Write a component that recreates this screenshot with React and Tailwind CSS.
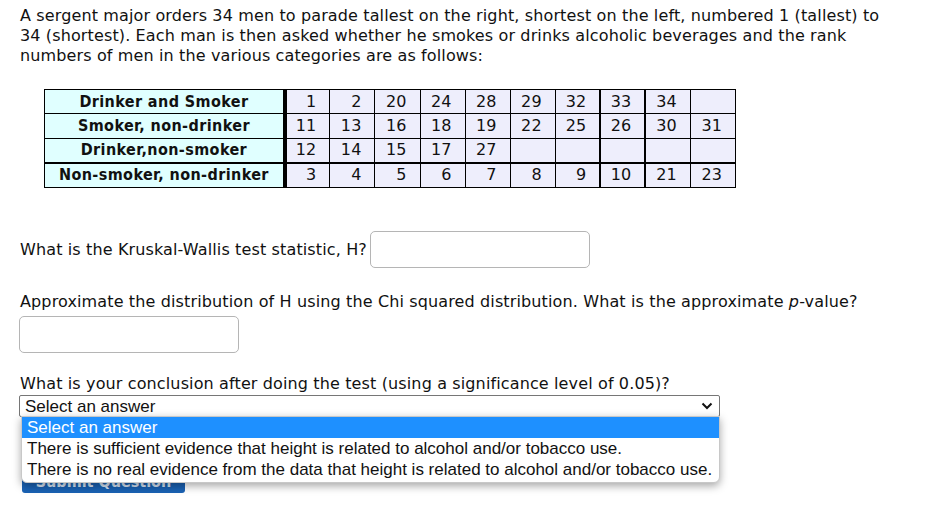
import React from "react";

const rows = [
  { label: "Drinker and Smoker", vals: ["1", "2", "20", "24", "28", "29", "32", "33", "34", ""], h: "h-[24px]" },
  { label: "Smoker, non-drinker", vals: ["11", "13", "16", "18", "19", "22", "25", "26", "30", "31"], h: "h-[25px]" },
  { label: "Drinker,non-smoker", vals: ["12", "14", "15", "17", "27", "", "", "", "", ""], h: "h-[24px]" },
  { label: "Non-smoker, non-drinker", vals: ["3", "4", "5", "6", "7", "8", "9", "10", "21", "23"], h: "h-[25px]" },
];

export default function App() {
  return (
    <div
      className="relative w-[927px] h-[507px] overflow-hidden bg-white text-[16px] leading-[20px] text-[#111] tracking-[0.13px]"
      style={{ fontFamily: '"DejaVu Sans", "Noto Sans", sans-serif' }}
    >
      <div className="pl-[20px] pt-[6px]">
        <p className="whitespace-nowrap">
          A sergent major orders 34 men to parade tallest on the right, shortest on the left, numbered 1 (tallest) to
          <br />
          34 (shortest). Each man is then asked whether he smokes or drinks alcoholic beverages and the rank
          <br />
          numbers of men in the various categories are as follows:
        </p>

        <table className="mt-[23px] ml-[24px] border-collapse border border-black table-fixed w-[692px]">
          <colgroup>
            <col className="w-[240px]" />
            {rows[0].vals.map((_, i) => (
              <col key={i} className="w-[45px]" />
            ))}
          </colgroup>
          <tbody>
            {rows.map((r, ri) => (
              <tr key={ri} className={ri === 3 ? "border-t-2 border-black" : ""}>
                <td
                  className={
                    r.h +
                    " p-0 text-center font-bold bg-[#e0ffff] border border-black border-r-4 leading-[20px] tracking-[0.4px]"
                  }
                  style={{ fontFamily: '"DejaVu Sans Condensed", "DejaVu Sans", sans-serif' }}
                >
                  {r.label}
                </td>
                {r.vals.map((v, ci) => (
                  <td
                    key={ci}
                    className={
                      r.h +
                      " p-0 pr-[13px] text-right bg-[#eeeefc] border border-black leading-[20px] " +
                      (ci === 6 || ci === 7 ? "border-r-2 " : "") +
                      (ri === 3 ? "border-t-2 " : "")
                    }
                  >
                    {v}
                  </td>
                ))}
              </tr>
            ))}
          </tbody>
        </table>

        <div className="mt-[43px] flex items-center">
          <span className="whitespace-nowrap">What is the Kruskal-Wallis test statistic, H?</span>
          <div className="ml-[3px] w-[220px] h-[37px] border border-[#b5b5b5] rounded-[5px] bg-white" />
        </div>

        <p className="mt-[24px] whitespace-nowrap">
          Approximate the distribution of H using the Chi squared distribution. What is the approximate{" "}
          <i>p</i>-value?
        </p>
        <div className="mt-[4px] -ml-[1px] w-[220px] h-[37px] border border-[#b5b5b5] rounded-[5px] bg-white" />

        <p className="mt-[21px] whitespace-nowrap">
          What is your conclusion after doing the test (using a significance level of 0.05)?
        </p>

        <div
          className="relative mt-[1px] -ml-[1px] w-[701px] text-[17px] tracking-normal"
          style={{ fontFamily: '"Liberation Sans", Arial, sans-serif' }}
        >
          <div className="h-[22px] border border-[#767676] rounded-[2px] bg-white flex items-center justify-between pl-[5px] pr-[5px] leading-[18px]">
            <span className="pt-[1px]">Select an answer</span>
            <svg width="12" height="8" viewBox="0 0 12 8" className="mr-[1px]">
              <path d="M1.5 1.5 L6 6 L10.5 1.5" fill="none" stroke="#111" strokeWidth="2" />
            </svg>
          </div>

          <div
            className="relative mt-[53px] ml-[3px] w-[163px] h-[23px] rounded-[3px] bg-[#1a62b4] text-[#d8e4f4] font-bold text-center leading-[23px] text-[16px]"
            style={{ fontFamily: '"DejaVu Sans Condensed", "Noto Sans", sans-serif' }}
          >
            Submit Question
          </div>

          <div className="absolute left-[2px] top-[21px] w-[699px] bg-white rounded-b-[6px] shadow-[0_3px_8px_rgba(0,0,0,0.35)] overflow-hidden border border-[#c8c8c8] pb-[2px]">
            <div className="h-[21px] leading-[22px] pl-[5px] bg-[#1e90ff] text-white">Select an answer</div>
            <div className="h-[21px] leading-[22px] pl-[5px]">
              There is sufficient evidence that height is related to alcohol and/or tobacco use.
            </div>
            <div className="h-[21px] leading-[22px] pl-[5px]">
              There is no real evidence from the data that height is related to alcohol and/or tobacco use.
            </div>
          </div>
        </div>
      </div>
    </div>
  );
}
